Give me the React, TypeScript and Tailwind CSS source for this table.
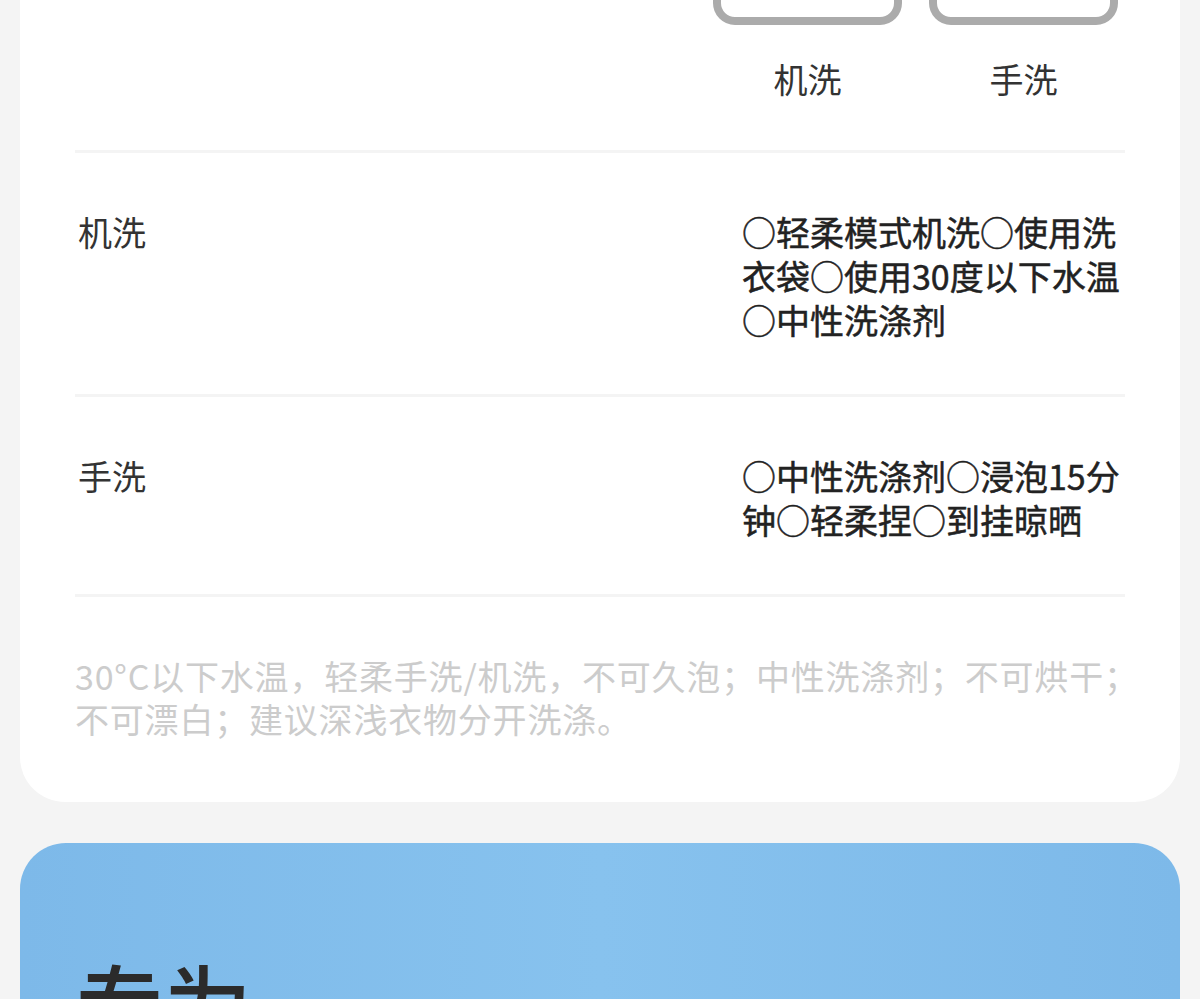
const font = { fontFamily: '"Noto Sans CJK SC", "Noto Sans", sans-serif' };

const WashBox = ({ label }: { label: string }) => (
  <div className="flex w-[189px] flex-col items-center">
    <div className="h-[150px] w-[189px] rounded-[22px] border-[8px] border-[#ababab] bg-white" />
    <div className="mt-[32px] text-[34px] leading-[44px] text-[#333]">{label}</div>
  </div>
);

const CareRow = ({ label, lines }: { label: string; lines: string[] }) => (
  <div className="flex justify-between border-b-[3px] border-[#f4f4f4] pt-[57px] pb-[52px]">
    <div className="pl-[3px] text-[34px] leading-[44px] text-[#333]">{label}</div>
    <div className="w-[383px] whitespace-nowrap text-[34px] leading-[44px] text-[#222] [-webkit-text-stroke:0.5px_#222]">
      {lines.map((l, i) => (
        <div key={i}>{l}</div>
      ))}
    </div>
  </div>
);

export default function App() {
  return (
    <div className="min-h-screen overflow-hidden bg-[#f4f4f4] px-[20px]" style={font}>
      <div className="-mt-[125px] rounded-b-[45px] bg-white px-[55px] pb-[62px]">
        <div className="flex justify-end gap-[27px] border-b-[3px] border-[#f4f4f4] pr-[7px] pb-[49px]">
          <WashBox label="机洗" />
          <WashBox label="手洗" />
        </div>
        <CareRow
          label="机洗"
          lines={["○轻柔模式机洗○使用洗", "衣袋○使用30度以下水温", "○中性洗涤剂"]}
        />
        <CareRow label="手洗" lines={["○中性洗涤剂○浸泡15分", "钟○轻柔捏○到挂晾晒"]} />
        <p className="mt-[57px] whitespace-nowrap text-[34px] leading-[43px] tracking-[0.8px] text-[#cccccc]">
          30°C以下水温，轻柔手洗/机洗，不可久泡；中性洗涤剂；不可烘干；
          <br />
          不可漂白；建议深浅衣物分开洗涤。
        </p>
      </div>
      <div className="mt-[41px] h-[400px] rounded-[46px] bg-gradient-to-r from-[#7db9e9] via-[#87c2ee] to-[#7db9e9] px-[56px] pt-[98px]">
        <h2 className="text-[88px] leading-[120px] font-medium text-[#2b2b2b]">专为</h2>
      </div>
    </div>
  );
}
